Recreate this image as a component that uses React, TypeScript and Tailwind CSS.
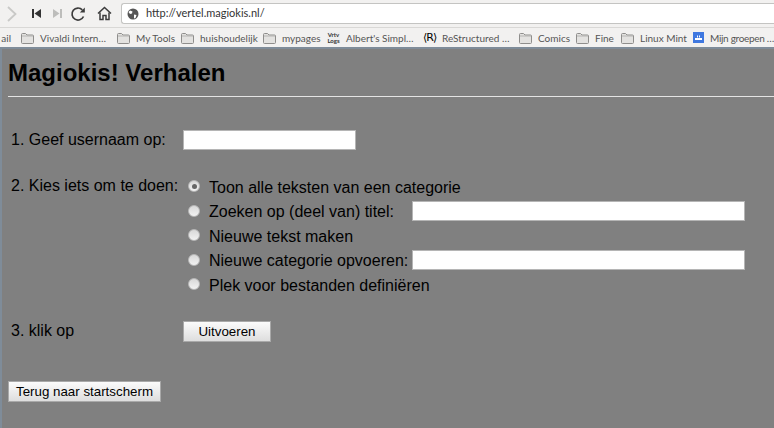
import { ReactNode } from "react";

const uiFont = "font-['Lato','Noto_Sans',sans-serif]";

function FolderIcon() {
  return (
    <svg width="13" height="11" viewBox="0 0 13 11" className="shrink-0">
      <path d="M0.5 9.500V1.500a1 1 0 0 1 1-1h3l1.500 1.500h5.500a1 1 0 0 1 1 1v6.500a1 1 0 0 1-1 1h-10a1 1 0 0 1-1-1z" fill="#e3e2e0" stroke="#8f8e8c" />
      <path d="M1 3h11" stroke="#b5b4b2" />
    </svg>
  );
}

function Bookmark({ icon, label, className }: { icon: ReactNode; label: string; className: string }) {
  return (
    <div className={`flex items-center gap-[6px] shrink-0 ${className}`}>
      {icon}
      <span className="whitespace-nowrap">{label}</span>
    </div>
  );
}

function Radio({ checked }: { checked?: boolean }) {
  return (
    <span className="w-3 h-3 shrink-0 rounded-full bg-gradient-to-b from-[#d8d8d8] to-[#f2f2f2] border border-[#b8b8b8] flex items-center justify-center">
      {checked && <span className="w-[5px] h-[5px] rounded-full bg-[#666]" />}
    </span>
  );
}

function GrayButton({ label, className }: { label: string; className: string }) {
  return (
    <button className={`h-[21px] border border-[#a9a9a9] bg-gradient-to-b from-[#fbfbfb] to-[#dedede] text-[13.33px] text-black ${className}`}>
      {label}
    </button>
  );
}

export default function App() {
  return (
    <div className="w-[774px] h-[428px] overflow-hidden bg-[#808080] flex flex-col font-['Liberation_Sans',Arial,sans-serif]">
      {/* 툴바 */}
      <div className="h-[27px] shrink-0 bg-[#f2f1f0] flex items-center pl-[7px] pr-0">
        <svg width="10" height="16" viewBox="0 0 10 16" className="shrink-0">
          <path d="M1 1 8.500 8 1 15" fill="none" stroke="#c9c9c7" strokeWidth="1.800" />
        </svg>
        <svg width="10" height="11" viewBox="0 0 10 11" className="ml-[15px] shrink-0">
          <path d="M1 1v9" stroke="#333" strokeWidth="2" />
          <path d="M9 1v9L2.500 5.500z" fill="#333" />
        </svg>
        <svg width="10" height="11" viewBox="0 0 10 11" className="ml-[10px] shrink-0">
          <path d="M9 1v9" stroke="#bdbdbb" strokeWidth="2" />
          <path d="M1 1v9l6.500-4.500z" fill="#bdbdbb" />
        </svg>
        <svg width="16" height="16" viewBox="0 0 16 16" className="ml-[8px] shrink-0">
          <path d="M13.500 10.500A6 6 0 1 1 12.300 3.800" fill="none" stroke="#3c3c3c" strokeWidth="1.700" />
          <path d="M14.800 1.500v5h-5z" fill="#3c3c3c" />
        </svg>
        <svg width="15" height="15" viewBox="0 0 15 15" className="ml-[11px] shrink-0">
          <path d="M1 7.500 7.500 1.500 14 7.500" fill="none" stroke="#3c3c3c" strokeWidth="1.600" />
          <path d="M3 6.500v7h3v-4h3v4h3v-7" fill="none" stroke="#3c3c3c" strokeWidth="1.500" />
        </svg>
        <div className={`ml-[9px] flex-1 h-[21px] bg-white border border-[#c4c4c2] border-r-0 rounded-l-[3px] flex items-center pl-[5px] text-[11px] text-[#333] ${uiFont}`}>
          <svg width="12" height="12" viewBox="0 0 12 12" className="shrink-0">
            <circle cx="6" cy="6" r="5.500" fill="#555" />
            <path d="M3 2.500 5.500 3.500 5 5.500 3 6 1.500 4zM7 6.500 9.500 7 8.500 10 7 10.500z" fill="#fff" />
          </svg>
          <span className="ml-[7px]">http://vertel.magiokis.nl/</span>
        </div>
      </div>

      {/* 북마크 바 */}
      <div className={`h-[22px] shrink-0 pt-[1px] bg-[#f2f1f0] border-t border-[#d9d8d6] border-b-2 border-b-[#7f8c99] flex items-center text-[10px] text-[#555] overflow-hidden ${uiFont}`}>
        <span className="w-[21px] shrink-0 text-right pr-[10px] whitespace-nowrap overflow-hidden">ail</span>
        <Bookmark icon={<FolderIcon />} label="Vivaldi Intern…" className="w-[96px]" />
        <Bookmark icon={<FolderIcon />} label="My Tools" className="w-[64px]" />
        <Bookmark icon={<FolderIcon />} label="huishoudelijk" className="w-[82px]" />
        <Bookmark icon={<FolderIcon />} label="mypages" className="w-[64px]" />
        <Bookmark
          icon={
            <span className="w-[13px] text-[6px] leading-[6px] font-bold text-center text-[#333] bg-[#eee]">
              Vrtv
              <br />
              Logs
            </span>
          }
          label="Albert's Simpl…"
          className="w-[96px]"
        />
        <Bookmark
          icon={<span className="w-[13px] text-[11px] text-center text-black tracking-[-1px] font-['DejaVu_Sans',sans-serif]">⟨R⟩</span>}
          label="ReStructured …"
          className="w-[96px]"
        />
        <Bookmark icon={<FolderIcon />} label="Comics" className="w-[57px]" />
        <Bookmark icon={<FolderIcon />} label="Fine" className="w-[45px]" />
        <Bookmark icon={<FolderIcon />} label="Linux Mint" className="w-[72px]" />
        <Bookmark
          icon={
            <svg width="11" height="14" viewBox="0 0 11 14" className="shrink-0">
              <rect width="11" height="11" y="1" fill="#3f78e0" />
              <path d="M2 7h7v2H2zM4 4.500h1v2H4zM6 4.500h1v2H6z" fill="#fff" />
            </svg>
          }
          label="Mijn groepen …"
          className="w-[77px] tracking-[-0.3px]"
        />
      </div>

      {/* 본문 */}
      <main className="flex-1 border-l-2 border-[#7f8c99] pl-[6px] text-[16px] text-black">
        <h1 className="text-[24px] leading-[28px] font-bold pt-[10px]">Magiokis! Verhalen</h1>
        <hr className="mt-[9px] border-0 h-[1px] bg-[#e4e4e4]" />

        <div className="grid grid-cols-[172px_1fr] pl-[3px] mt-[33px]">
          <div className="leading-[20px]">1. Geef usernaam op:</div>
          <div className="h-[20px] w-[173px] bg-white border border-[#b5b5b5]" />
        </div>

        <div className="grid grid-cols-[177px_1fr] pl-[3px] mt-[26px]">
          <div className="leading-[20px]">2. Kies iets om te doen:</div>
          <div className="flex flex-col">
            <div className="h-[24px] -mt-[2px] flex items-center gap-[9px]">
              <Radio checked />
              <span className="pt-[3px]">Toon alle teksten van een categorie</span>
            </div>
            <div className="h-[25px] flex items-center gap-[9px]">
              <Radio />
              <span className="w-[194px] pt-[2px]">Zoeken op (deel van) titel:</span>
              <div className="h-[20px] w-[333px] bg-white border border-[#b5b5b5]" />
            </div>
            <div className="h-[24px] flex items-center gap-[9px]">
              <Radio />
              <span className="pt-[3px]">Nieuwe tekst maken</span>
            </div>
            <div className="h-[25px] flex items-center gap-[9px]">
              <Radio />
              <span className="w-[194px] pt-[2px] whitespace-nowrap">Nieuwe categorie opvoeren:</span>
              <div className="h-[20px] w-[333px] bg-white border border-[#b5b5b5]" />
            </div>
            <div className="h-[24px] flex items-center gap-[9px]">
              <Radio />
              <span className="pt-[3px]">Plek voor bestanden definiëren</span>
            </div>
          </div>
        </div>

        <div className="grid grid-cols-[172px_1fr] pl-[3px] mt-[25px]">
          <div className="leading-[20px]">3. klik op</div>
          <GrayButton label="Uitvoeren" className="w-[88px]" />
        </div>

        <GrayButton label="Terug naar startscherm" className="w-[153px] mt-[39px] block" />
      </main>
    </div>
  );
}
